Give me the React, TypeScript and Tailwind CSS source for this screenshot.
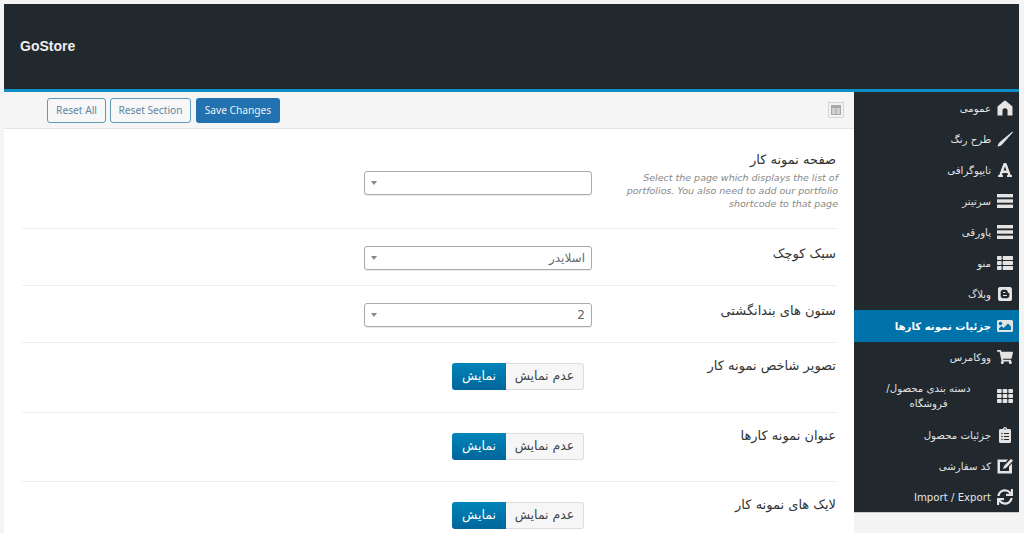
import { ReactNode } from 'react';
import { FaFont, FaThList, FaBlogger, FaImage, FaShoppingCart, FaTh, FaClipboardList, FaSync } from 'react-icons/fa';

const fa = "font-['DejaVu_Sans',sans-serif]";

type IconProps = { className?: string };

function Home({ className }: IconProps) {
  return (
    <svg viewBox="0 0 16 16" className={className} fill="currentColor">
      <path d="M7 0.9 Q8 0.2 9 0.9 L15.5 6.5 V15.5 H10.5 V10.5 C10.5 9 9.5 8.3 8 8.3 C6.5 8.3 5.5 9 5.5 10.5 V15.5 H0.5 V6.5 Z" />
    </svg>
  );
}

function Pen({ className }: IconProps) {
  return (
    <svg viewBox="0 0 16 16" className={className} fill="currentColor">
      <path d="M15.5 0.5 L16 1.2 L6 12.5 C4.8 14.5 2.5 15.5 0.5 15.5 C1 13.5 2 11.5 4 10 Z" />
    </svg>
  );
}

function Bars({ className }: IconProps) {
  return (
    <svg viewBox="0 0 16 16" className={className} fill="currentColor">
      <rect x="0" y="1" width="16" height="3.4" />
      <rect x="0" y="6.3" width="16" height="3.4" />
      <rect x="0" y="11.6" width="16" height="3.4" />
    </svg>
  );
}

function EditBox({ className }: IconProps) {
  return (
    <svg viewBox="0 0 16 16" className={className} fill="currentColor">
      <path d="M0.5 1.5 H11 L8.8 4 H3 V13 H12 V8.5 L15 5.5 V15.5 H0.5 Z" />
      <path d="M14 0.8 L16 2.8 L9 10 L6 11 L7 8 Z" />
    </svg>
  );
}

const nav = [
  { label: 'عمومی', icon: Home, h: 'h-[31.1px]' },
  { label: 'طرح رنگ', icon: Pen, h: 'h-[31.1px]' },
  { label: 'تایپوگرافی', icon: FaFont, h: 'h-[31.1px]' },
  { label: 'سرتیتر', icon: Bars, h: 'h-[31.1px]' },
  { label: 'پاورقی', icon: Bars, h: 'h-[31.1px]' },
  { label: 'منو', icon: FaThList, h: 'h-[31.1px]' },
  { label: 'وبلاگ', icon: FaBlogger, h: 'h-[31.4px]' },
  { label: 'جزئیات نمونه کارها', icon: FaImage, h: 'h-[32px]', active: true },
  { label: 'ووکامرس', icon: FaShoppingCart, h: 'h-[31px]' },
  { label: 'دسته بندی محصول/ فروشگاه', icon: FaTh, h: 'h-[46px]' },
  { label: 'جزئیات محصول', icon: FaClipboardList, h: 'h-[31.3px]' },
  { label: 'کد سفارشی', icon: EditBox, h: 'h-[31.3px]' },
  { label: 'Import / Export', icon: FaSync, h: 'h-[30.4px]' },
];

function Select({ value }: { value?: string }) {
  return (
    <div className="flex h-[24px] w-[228px] items-center justify-between rounded-[3px] border border-[#aaaaaa] bg-white pl-[6px] pr-[6px] shadow-[0_1px_1px_rgba(0,0,0,0.08)]">
      <span className="h-0 w-0 border-x-[3px] border-t-[4px] border-x-transparent border-t-[#888888]" />
      <span className={`${fa} text-[12px] text-[#666666]`}>{value}</span>
    </div>
  );
}

function Toggle() {
  return (
    <div className={`${fa} mr-2 flex h-[27px] w-[132px] text-[12.5px]`}>
      <div className="flex w-[54px] items-center justify-center rounded-l-[3px] bg-gradient-to-b from-[#0085ba] to-[#00669b] text-white">
        نمایش
      </div>
      <div className="flex flex-1 items-center justify-center rounded-r-[3px] border border-l-0 border-[#dddddd] bg-[#f6f6f6] text-[#444444]">
        عدم نمایش
      </div>
    </div>
  );
}

function Row({ label, hint, pad, ctrlPad, border = true, children }: {
  label: string; hint?: string; pad: string; ctrlPad: string; border?: boolean; children: ReactNode;
}) {
  return (
    <div className={`flex justify-end gap-[22px] ${pad} ${border ? 'border-b border-[#eeeeee]' : ''}`}>
      <div className={ctrlPad}>{children}</div>
      <div className="w-[222px] text-right">
        <div className={`${fa} text-[13px] leading-[16px] text-[#333333]`}>{label}</div>
        {hint && (
          <p className="-mr-[2px] mt-[3px] font-['DejaVu_Sans',sans-serif] text-[9.5px] italic leading-[13px] text-[#888888]">
            {hint}
          </p>
        )}
      </div>
    </div>
  );
}

export default function App() {
  return (
    <div className="flex h-[533px] w-[1024px] flex-col overflow-hidden bg-[#f4f4f4] pl-1 pr-[5px] pt-1">
      <header className="flex h-[88px] shrink-0 items-center border-b-[3px] border-[#0e8fc4] bg-[#21282e] pl-4">
        <span className="font-['Liberation_Sans',sans-serif] text-[14px] font-bold text-[#eeeeee]">GoStore</span>
      </header>
      <div className="flex min-h-0 flex-1">
        <main className="min-w-0 flex-1 bg-white">
          <div className="flex h-[37px] items-center justify-between border-b border-[#e5e5e5] bg-[#f5f5f5] pl-[43px] pr-[10px]">
            <div className="flex gap-1 font-['Noto_Sans',sans-serif] text-[10.2px]">
              <button className="h-[25px] w-[59px] rounded-[3px] border border-[#5f9ab8] bg-[#f7f7f7] pt-px text-[#5c87a3]">Reset All</button>
              <button className="h-[25px] w-[81px] rounded-[3px] border border-[#5f9ab8] bg-[#f7f7f7] pt-px text-[#5c87a3]">Reset Section</button>
              <button className="ml-px h-[25px] w-[84px] rounded-[3px] bg-[#2271b1] pt-px text-[#f0f0f0]">Save Changes</button>
            </div>
            <svg viewBox="0 0 16 16" className="h-4 w-4">
              <rect x="0.5" y="0.5" width="15" height="15" fill="#f2f2f2" stroke="#d5d5d5" />
              <rect x="3" y="3" width="10" height="10" fill="#a8a8a8" />
              <rect x="4" y="6" width="3.5" height="6" fill="#d0d0d0" />
              <rect x="8.5" y="6" width="3.5" height="6" fill="#d0d0d0" />
            </svg>
          </div>
          <div className="pl-[18px] pr-[18px]">
            <Row
              label="صفحه نمونه کار"
              hint="Select the page which displays the list of portfolios. You also need to add our portfolio shortcode to that page"
              pad="h-[100px] pt-[23px]"
              ctrlPad="pt-[19px]"
            >
              <Select />
            </Row>
            <Row label="سبک کوچک" pad="h-[57px] pt-[17px]" ctrlPad="">
              <Select value="اسلایدر" />
            </Row>
            <Row label="ستون های بندانگشتی" pad="h-[57px] pt-[17px]" ctrlPad="">
              <Select value="2" />
            </Row>
            <Row label="تصویر شاخص نمونه کار" pad="h-[70px] pt-[15px]" ctrlPad="pt-[5px]">
              <Toggle />
            </Row>
            <Row label="عنوان نمونه کارها" pad="h-[69px] pt-[15px]" ctrlPad="pt-[5px]">
              <Toggle />
            </Row>
            <Row label="لایک های نمونه کار" pad="h-[69px] pt-[15px]" ctrlPad="pt-[5px]" border={false}>
              <Toggle />
            </Row>
          </div>
        </main>
        <aside className="w-[165px] shrink-0 bg-[#f4f4f4]">
          <nav className="border-b border-[#cccccc] bg-[#21282e]">
            {nav.map(({ label, icon: Icon, h, active }) => (
              <div
                key={label}
                className={`flex items-center justify-end gap-[6px] pr-[6px] ${h} ${active ? 'bg-[#0073aa] font-bold text-white' : 'text-[#e2e4e5]'}`}
              >
                <span className={`${fa} max-w-[125px] pt-px text-center text-[10.2px] leading-[15px]`}>{label}</span>
                <Icon className="h-4 w-4 shrink-0 text-[#e4e4e4]" />
              </div>
            ))}
          </nav>
        </aside>
      </div>
    </div>
  );
}
